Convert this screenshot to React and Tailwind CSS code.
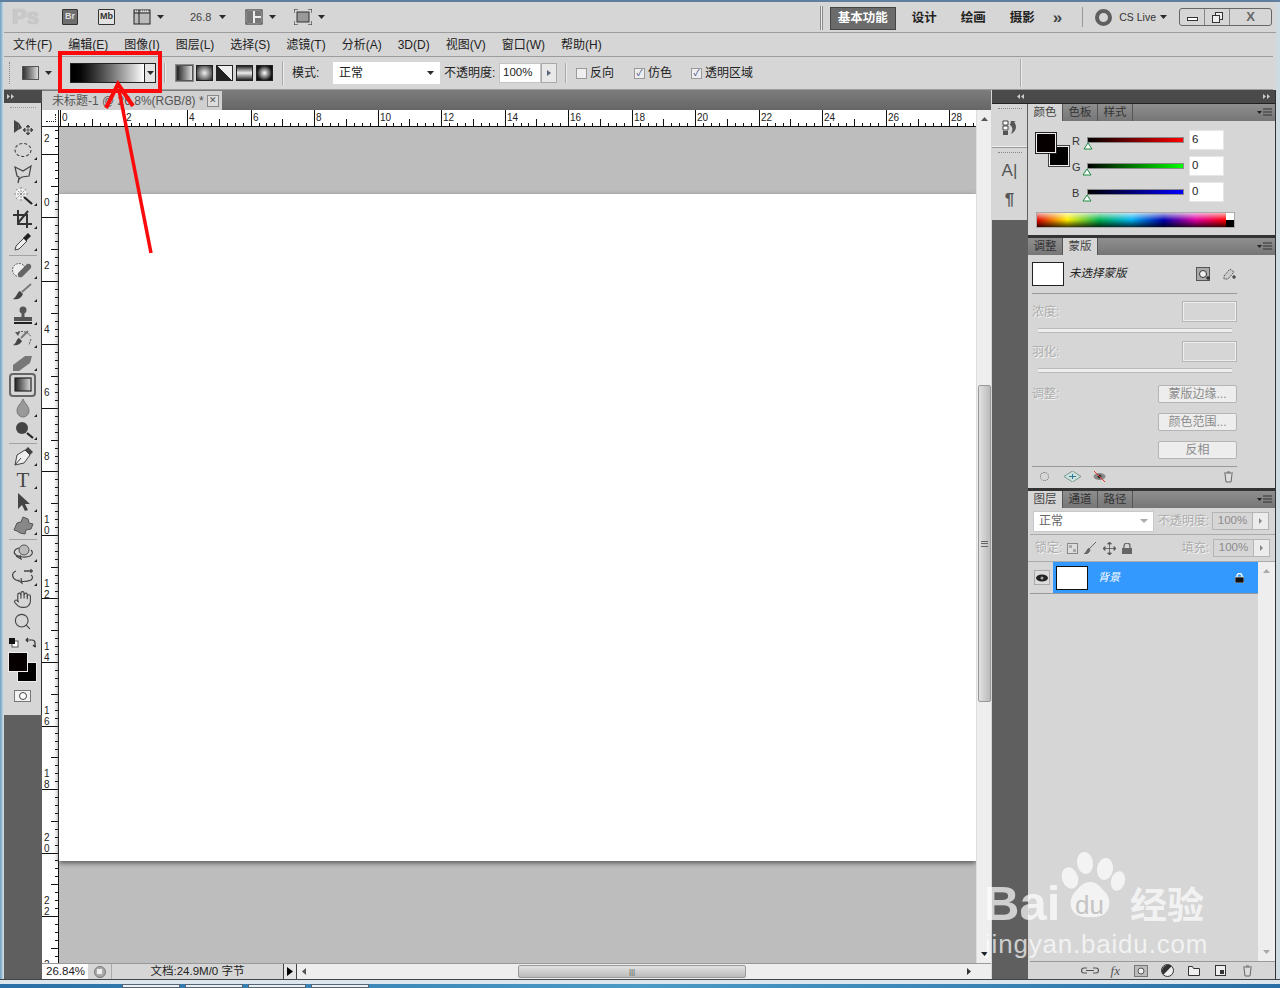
import React from 'react';
import { Hand, Search } from 'lucide-react';

const menus = ['文件(F)', '编辑(E)', '图像(I)', '图层(L)', '选择(S)', '滤镜(T)', '分析(A)', '3D(D)', '视图(V)', '窗口(W)', '帮助(H)'];

const Caret = ({ className = '' }) => (
  <svg width="7" height="4" viewBox="0 0 7 4" className={className}><path d="M0 0h7L3.500 4z" fill="#2a2a2a" /></svg>
);

const Sep = ({ className = '' }) => <div className={`w-px bg-[#a9a9a9] border-r border-[#ececec] box-content ${className}`} />;

// tools : une icone par ligne, viewBox 37x23
const Corner = () => <path d="M33 21h-3l3-3z" fill="#222" />;
const tools = [
  { h: 23, d: <><path d="M10 4v13l4-3 1-7z" fill="#444" /><path d="M15 7l3 5-4 2z" fill="#444" /><path d="M24 9v10M19 14h10M24 9l-2 2h4zM24 19l-2-2h4zM19 14l2-2v4zM29 14l-2-2v4z" stroke="#444" fill="#444" strokeWidth="0.800" /></> },
  { h: 23, corner: true, d: <ellipse cx="19" cy="11" rx="8" ry="6.500" fill="none" stroke="#444" strokeWidth="1.100" strokeDasharray="3 2" /> },
  { h: 23, corner: true, d: <path d="M11 5l8 4 8-5-2 10-7 1-3 2-1 4 1-6-2-1z" fill="none" stroke="#444" strokeWidth="1.200" /> },
  { h: 23, corner: true, d: <><circle cx="17" cy="9" r="5.500" fill="#f2f2f2" /><path d="M17 2v14M10 9h14M12 4l10 10M22 4L12 14" stroke="#777" strokeWidth="0.800" strokeDasharray="2 1" /><path d="M20 12l8 7" stroke="#222" strokeWidth="2.200" /></> },
  { h: 22, corner: true, d: <path d="M14 2v14h14M9 7h14v13M24 3L14 15" fill="none" stroke="#333" strokeWidth="2" /> },
  { h: 23, corner: true, d: <><path d="M11 20l1-4 8-8 3 3-8 8z" fill="#eee" stroke="#444" strokeWidth="1" /><path d="M19 8l5-5 3 3-5 5z" fill="#222" /></> },
  { sep: true, h: 5 },
  { h: 23, corner: true, d: <><circle cx="15" cy="12" r="6.500" fill="#eee" stroke="#666" strokeDasharray="2 1" /><path d="M14 15l9-9a3 3 0 014 4l-9 9a3 3 0 01-4-4z" fill="#666" /></> },
  { h: 23, corner: true, d: <><path d="M9 18c3 1 8 0 10-5l-3-3c-3 1-3 6-7 8z" fill="#444" /><path d="M18 11l9-8" stroke="#777" strokeWidth="1.800" /></> },
  { h: 23, corner: true, d: <><circle cx="19" cy="6" r="3.500" fill="#555" /><path d="M17.500 8h3v5h-3z" fill="#555" /><path d="M10 13h18v4H10z" fill="#555" /><path d="M10 18h18v2H10z" fill="#222" /></> },
  { h: 23, corner: true, d: <><path d="M9 18c3 1 7 0 9-4l-3-3c-3 1-2 5-6 7z" fill="#444" /><path d="M17 11l7-7" stroke="#777" strokeWidth="1.800" /><path d="M14 5a10 8 0 0113 5M27 12l-2 6" fill="none" stroke="#555" strokeDasharray="2 1" /><path d="M11 5h5l-2 4z" fill="#555" /></> },
  { h: 23, corner: true, d: <path d="M9 15l12-9h7l-2 7-11 8H9z" fill="#777" /> },
  { h: 23, corner: true, selected: true, d: <rect x="11" y="5" width="16" height="13" fill="url(#toolGrad)" stroke="#222" strokeWidth="1.200" /> },
  { h: 23, corner: true, d: <path d="M19 3c-2 5-6 7-6 12a6 6 0 0012 0c0-5-4-7-6-12z" fill="#999" stroke="#777" /> },
  { h: 23, corner: true, d: <><circle cx="18" cy="9" r="6" fill="#444" /><path d="M23 14l6 5" stroke="#222" strokeWidth="2.200" /></> },
  { sep: true, h: 3 },
  { h: 23, corner: true, d: <><path d="M11 20l2-10 8-5 5 5-6 8z" fill="#eee" stroke="#444" strokeWidth="1" /><path d="M21 5l3-3 5 5-3 3z" fill="#444" /><path d="M11 20l6-7" stroke="#444" /></> },
  { h: 23, corner: true, d: <text x="19" y="19" textAnchor="middle" fontFamily="Liberation Serif, serif" fontSize="21" fill="#444">T</text> },
  { h: 23, corner: true, d: <path d="M14 2v16l4-4 3 6 3-1-3-6h5z" fill="#444" /> },
  { h: 23, corner: true, d: <path d="M10 16l3-7 4-1 2-5 5 2 1 4 4 1-2 5-5 1-1 4-5-1-3-2z" fill="#888" stroke="#555" /> },
  { sep: true, h: 4 },
  { h: 24, corner: true, d: <><circle cx="20" cy="9" r="5" fill="#bbb" stroke="#555" /><path d="M15 7c-5 1-6 5-3 7s10 3 14 1c3-2 3-4 1-6M12 15l5 3-1-4" fill="none" stroke="#444" strokeWidth="1.200" /></> },
  { h: 23, corner: true, d: <><path d="M12 6c-5 2-4 7 0 9s11 2 15 0c2-2 2-4 0-5M14 15l4 3-1-5" fill="none" stroke="#444" strokeWidth="1.200" /><path d="M20 6h9M27 4v4" stroke="#444" strokeWidth="1.300" /></> },
  { h: 22, icon: Hand },
  { h: 22, icon: Search },
];

function ToolRow({ tool }) {
  if (tool.sep) return <div className="flex items-center justify-center" style={{ height: tool.h }}><div className="w-[28px] h-px bg-[#a3a3a3]" /></div>;
  const Icon = tool.icon;
  if (Icon) {
    return (
      <div className="flex items-center justify-center" style={{ height: tool.h }}>
        <Icon size={19} strokeWidth={1.400} color="#444" />
      </div>
    );
  }
  return (
    <div className="flex items-center justify-center" style={{ height: tool.h }}>
      <div className={tool.selected ? 'w-[27px] h-[24px] flex items-center justify-center overflow-hidden rounded-[4px] border-2 border-[#666]' : ''}>
        <svg width="37" height={tool.h} viewBox={`0 0 37 ${tool.h}`} className="shrink-0">
          {tool.d}
          {tool.corner && !tool.selected && <Corner />}
        </svg>
      </div>
    </div>
  );
}

function Toolbar() {
  return (
    <div className="w-[38px] shrink-0 flex flex-col bg-[#5f5f5f]">
      <div className="h-[13px] bg-[#4a4a4a] flex items-center pl-[3px]">
        <svg width="8" height="5"><path d="M0 0l3 2.500L0 5zM4 0l3 2.500L4 5z" fill="#ccc" /></svg>
      </div>
      <div className="h-[612px] bg-[#d6d6d6] border-r border-[#333] flex flex-col">
        <svg width="37" height="0"><defs><linearGradient id="toolGrad"><stop offset="0" stopColor="#222" /><stop offset="1" stopColor="#ddd" /></linearGradient></defs></svg>
        <div className="h-[13px] flex justify-center pt-[4px]"><div className="w-[26px] h-[2px] border-t border-dotted border-[#999]" /></div>
        {tools.map((t, i) => <ToolRow key={i} tool={t} />)}
        <div className="h-[11px] flex items-center justify-between px-[5px] mt-[5px]">
          <svg width="10" height="10"><rect x="3" y="3" width="6" height="6" fill="#fff" stroke="#555" /><rect width="6" height="6" fill="#111" /></svg>
          <svg width="11" height="11" viewBox="0 0 11 11"><path d="M1 3h6a3 3 0 013 3v4M1 3l2-2M1 3l2 2M10 10l-2-2M10 10l2-2" fill="none" stroke="#333" strokeWidth="1.200" /></svg>
        </div>
        <div className="h-[31px] relative ml-[4px] mt-[4px]">
          <div className="absolute left-[9px] top-[10px] w-[20px] h-[20px] bg-black border border-[#eee]" />
          <div className="absolute left-0 top-0 w-[20px] h-[20px] bg-[#060000] border border-[#eee]" />
        </div>
        <div className="flex justify-center mt-[7px]">
          <div className="w-[17px] h-[12px] bg-[#f2f2f2] border border-[#777] flex items-center justify-center">
            <div className="w-[8px] h-[8px] rounded-full border border-[#444] bg-white" />
          </div>
        </div>
      </div>
    </div>
  );
}

function TitleBar() {
  return (
    <div className="h-[31px] shrink-0 border-b border-[#9c9c9c] flex items-center">
      <span className="ml-[8px] w-[34px] text-[22px] font-bold text-[#c9c9c9] [text-shadow:0_0_1px_#aaa] leading-none">Ps</span>
      <div className="ml-[16px] w-[16px] h-[16px] bg-[#6e6e6e] border border-[#333] rounded-[1px] text-[9px] font-bold text-[#ddd] flex items-center justify-center">Br</div>
      <div className="ml-[20px] w-[17px] h-[16px] bg-[#e2e2e2] border border-[#333] rounded-[1px] text-[9px] font-bold text-[#333] flex items-center justify-center">Mb</div>
      <svg className="ml-[18px]" width="18" height="16" viewBox="0 0 18 16"><rect x="1" y="1" width="16" height="14" fill="#bbb" stroke="#222" /><path d="M1 4h16M6 1v14" stroke="#222" /><path d="M2 2h1M4 2h1M8 2h1M10 2h1M12 2h1M14 2h1" stroke="#fff" /></svg>
      <Caret className="ml-[6px]" />
      <span className="ml-[26px] text-[11px] text-[#444] w-[30px]">26.8</span>
      <Caret className="ml-[-1px]" />
      <svg className="ml-[19px]" width="18" height="16" viewBox="0 0 18 16"><rect x="1" y="1" width="16" height="14" fill="#eee" stroke="#222" /><path d="M2 2h6v12H2zM10 2h6v5h-6zM10 9h6v5h-6z" fill="#777" /></svg>
      <Caret className="ml-[6px]" />
      <svg className="ml-[18px]" width="18" height="16" viewBox="0 0 18 16"><rect x="3" y="3" width="12" height="10" fill="#999" stroke="#333" /><path d="M0 4V0h4M14 0h4v4M18 12v4h-4M4 16H0v-4" fill="none" stroke="#222" /></svg>
      <Caret className="ml-[6px]" />
      <div className="flex-1" />
      <div className="w-[3px] h-[24px] mt-[2px] border-x border-[#888] bg-[#eee]" />
      <div className="ml-[7px] mt-[2px] w-[66px] h-[23px] bg-[#6b6b6b] border border-[#444] text-white text-[12.500px] font-bold flex items-center justify-center">基本功能</div>
      <span className="ml-[16px] mt-[2px] text-[12.500px] font-bold text-[#222]">设计</span>
      <span className="ml-[24px] mt-[2px] text-[12.500px] font-bold text-[#222]">绘画</span>
      <span className="ml-[24px] mt-[2px] text-[12.500px] font-bold text-[#222]">摄影</span>
      <span className="ml-[18px] text-[17px] font-bold text-[#444] leading-none">»</span>
      <div className="ml-[20px] w-px h-[20px] bg-[#999]" />
      <div className="ml-[12px] w-[17px] h-[17px] rounded-full border-[4px] border-[#5f5f5f]" />
      <span className="ml-[7px] mt-[2px] text-[10.500px] text-[#333]">CS Live</span>
      <Caret className="ml-[4px]" />
      <div className="ml-[12px] mr-[4px] w-[93px] h-[18px] border border-[#666] rounded-[3px] flex items-center text-[#444]">
        <div className="w-[25px] h-full border-r border-[#888] flex items-center justify-center"><div className="w-[11px] h-[4px] bg-white border border-[#333] mt-[4px]" /></div>
        <div className="w-[25px] h-full border-r border-[#888] flex items-center justify-center">
          <svg width="11" height="11"><rect x="3.500" y="0.500" width="7" height="7" fill="#eee" stroke="#333" /><rect x="0.500" y="3.500" width="7" height="7" fill="#eee" stroke="#333" /></svg>
        </div>
        <div className="flex-1 flex items-center justify-center text-[13px] font-bold text-[#666]">X</div>
      </div>
    </div>
  );
}

function MenuBar() {
  return (
    <div className="h-[23px] shrink-0 flex items-center gap-[16px] pl-[9px] text-[12px] text-[#222]">
      {menus.map(m => <span key={m}>{m}</span>)}
    </div>
  );
}

const GradBtn = ({ fill, active }) => (
  <div className={`w-[17px] h-[16px] border ${active ? 'border-[#555] outline outline-1 outline-[#888]' : 'border-[#222]'}`} style={{ background: fill }} />
);

const Check = ({ checked }) => (
  <div className="w-[11px] h-[11px] bg-[#eee] border border-[#9a9a9a] flex items-center justify-center text-[9px] leading-none text-[#3b4a88]">{checked ? '✓' : ''}</div>
);

function OptionsBar() {
  return (
    <div className="h-[34px] shrink-0 border-y border-[#9c9c9c] flex items-center text-[12px] text-[#222] mr-[3px]">
      <div className="ml-[5px] w-[3px] h-[22px] border-l border-dotted border-[#888]" />
      <div className="ml-[10px] w-[17px] h-[14px] border border-[#555] bg-linear-to-r from-[#333] to-[#ddd]" />
      <Caret className="ml-[6px]" />
      <div className="ml-[18px] w-[86px] h-[20px] border border-[#222] flex">
        <div className="flex-1 bg-linear-to-r from-black to-white" />
        <div className="w-[11px] bg-[#e5e5e5] border-l border-[#222] flex items-center justify-center"><Caret /></div>
      </div>
      <Sep className="ml-[8px] h-[20px]" />
      <div className="ml-[10px] flex gap-[3px]">
        <GradBtn active fill="linear-gradient(90deg,#222,#ddd)" />
        <GradBtn fill="radial-gradient(circle,#eee,#222)" />
        <GradBtn fill="linear-gradient(45deg,#222 50%,#eee 50%)" />
        <GradBtn fill="linear-gradient(180deg,#222,#eee 50%,#222)" />
        <GradBtn fill="radial-gradient(circle,#fff,#111 75%)" />
      </div>
      <Sep className="ml-[9px] h-[24px]" />
      <span className="ml-[8px] w-[41px]">模式:</span>
      <div className="w-[107px] h-[22px] bg-white flex items-center justify-between px-[6px]">
        <span>正常</span><Caret />
      </div>
      <span className="ml-[4px] w-[55px]">不透明度:</span>
      <div className="w-[42px] h-[20px] bg-white border border-[#c5c5c5] flex items-center pl-[3px] text-[11.500px]">100%</div>
      <div className="w-[16px] h-[20px] bg-[#e8e8e8] border border-[#aaa] flex items-center justify-center">
        <svg width="4" height="6"><path d="M0 0l4 3-4 3z" fill="#567" /></svg>
      </div>
      <Sep className="ml-[8px] h-[20px]" />
      <div className="ml-[9px] flex items-center gap-[3px]"><Check /><span>反向</span></div>
      <div className="ml-[20px] flex items-center gap-[3px]"><Check checked /><span>仿色</span></div>
      <div className="ml-[19px] flex items-center gap-[3px]"><Check checked /><span>透明区域</span></div>
      <Sep className="ml-[267px] h-[28px]" />
    </div>
  );
}

const rulerXs = Array.from({ length: 15 }, (_, i) => i);
const ticks = Array.from({ length: 119 }, (_, i) => i);

function TopRuler() {
  return (
    <svg width="916" height="17" className="block bg-white">
      {ticks.map(i => {
        const x = Math.round(i * 7.94) + 1.500;
        const len = i % 8 === 0 ? 17 : i % 4 === 0 ? 8 : 4;
        return <line key={i} x1={x} x2={x} y1={17 - len} y2={17} stroke="#111" />;
      })}
      {rulerXs.map(i => <text key={i} x={Math.round(i * 63.5) + 3} y={11} fontSize="10" fontFamily="Liberation Sans, sans-serif" fill="#222">{i * 2}</text>)}
      <line x1="0" x2="916" y1="16.500" y2="16.500" stroke="#111" />
    </svg>
  );
}

// le dernier chiffre (24) est coupe par le bord du document
const vLabels = ['2', '0', '2', '4', '6', '8', '10', '12', '14', '16', '18', '20', '22', '2'];

function LeftRuler() {
  return (
    <svg width="17" height="836" className="block bg-white shrink-0">
      {Array.from({ length: 106 }, (_, i) => i).map(i => {
        const y = Math.round(i * 7.94) + 3.500;
        const len = i % 8 === 3 ? 17 : i % 4 === 3 ? 8 : 4;
        return <line key={i} x1={17 - len} x2={17} y1={y} y2={y} stroke="#111" />;
      })}
      {vLabels.map((v, i) => (
        <text key={i} x="2" y={Math.round(i * 63.5) + 15} fontSize="10" fontFamily="Liberation Sans, sans-serif" fill="#222">
          {v.split('').map((c, j) => <tspan key={j} x="2" dy={j ? 11 : 0}>{c}</tspan>)}
        </text>
      ))}
      <line x1="16.500" x2="16.500" y1="0" y2="836" stroke="#111" />
    </svg>
  );
}

function Document() {
  return (
    <div className="w-[949px] shrink-0 flex flex-col bg-[#5f5f5f]">
      <div className="h-[20px] shrink-0 bg-linear-to-b from-[#7d7d7d] to-[#666] flex items-end">
        <div className="ml-0 w-[180px] h-[19px] bg-[#d0d0d0] flex items-center pl-[10px] pr-[3px] text-[12px] text-[#555]">
          <span className="flex-1 truncate">未标题-1 @ 26.8%(RGB/8) *</span>
          <div className="w-[12px] h-[12px] border border-[#888] bg-[#ddd] flex items-center justify-center text-[9px] leading-none text-[#555]">✕</div>
        </div>
      </div>
      <div className="flex-1 flex min-h-0">
        <div className="flex-1 flex flex-col min-w-0">
          <div className="h-[17px] shrink-0 flex bg-white border-b border-[#222]">
            <div className="w-[17px] h-full border-r border-[#222] flex items-end justify-end pb-[4px] pr-[2px]"><div className="w-[10px] h-[8px] border-b border-r border-dotted border-[#222]" /></div>
            <TopRuler />
          </div>
          <div className="flex h-[836px] overflow-hidden">
            <LeftRuler />
            <div className="flex-1 bg-[#bdbdbd] flex flex-col">
              <div className="h-[67px] shrink-0" />
              <div className="h-[667px] shrink-0 bg-white shadow-[0_2px_5px_#555]" />
            </div>
          </div>
        </div>
        <div className="w-[15px] shrink-0 bg-[#eeeeee] flex flex-col items-center border-l border-[#ddd]">
          <svg className="mt-[7px]" width="7" height="4"><path d="M3.500 0L7 4H0z" fill="#555" /></svg>
          <div className="mt-[264px] w-[13px] h-[317px] bg-linear-to-r from-[#e2e2e2] to-[#bbb] border border-[#999] rounded-[2px] flex items-center justify-center">
            <div className="w-[7px] h-[6px] border-y border-[#666] flex items-center"><div className="w-full h-px bg-[#666]" /></div>
          </div>
          <div className="flex-1" />
          <svg className="mb-[7px]" width="7" height="4"><path d="M0 0h7L3.500 4z" fill="#222" /></svg>
        </div>
      </div>
      <div className="h-[16px] shrink-0 bg-[#d6d6d6] border-t border-[#999] flex items-center text-[11.500px] text-[#222]">
        <div className="w-[46px] h-full bg-white pl-[4px] flex items-center">26.84%</div>
        <div className="w-[24px] h-full border-r border-[#aaa] flex items-center justify-center">
          <div className="w-[12px] h-[12px] rounded-full bg-[#aaa] border border-[#777] flex items-center justify-center"><div className="w-[5px] h-[5px] bg-[#eee]" /></div>
        </div>
        <div className="w-[171px] text-center">文档:24.9M/0 字节</div>
        <div className="w-[14px] h-full bg-[#e5e5e5] border-x border-[#444] flex items-center justify-center">
          <svg width="6" height="9"><path d="M0 0l6 4.500L0 9z" fill="#000" /></svg>
        </div>
        <div className="flex-1 h-full bg-[#eeeeee] flex items-center">
          <svg className="ml-[5px]" width="4" height="7"><path d="M4 0v7L0 3.500z" fill="#555" /></svg>
          <div className="ml-[212px] w-[228px] h-[13px] bg-linear-to-b from-[#e2e2e2] to-[#bbb] border border-[#999] rounded-[2px] flex items-center justify-center text-[8px] text-[#555] leading-none">|||</div>
          <div className="flex-1" />
          <svg className="mr-[20px]" width="4" height="7"><path d="M0 0v7l4-3.500z" fill="#333" /></svg>
        </div>
      </div>
    </div>
  );
}

function Dock() {
  return (
    <div className="w-[36px] shrink-0 ml-px flex flex-col bg-[#5f5f5f]">
      <div className="h-[14px] bg-[#4a4a4a] border-b border-[#222] flex items-center justify-end pr-[3px]">
        <svg width="8" height="5"><path d="M3 0L0 2.500 3 5zM7 0L4 2.500 7 5z" fill="#ccc" /></svg>
      </div>
      <div className="h-[43px] shrink-0 bg-[#d6d6d6] border-b border-[#f0f0f0] flex flex-col items-center mr-px">
        <div className="w-[24px] mt-[4px] border-t border-dotted border-[#888]" />
        <svg className="mt-[11px]" width="16" height="16" viewBox="0 0 16 16"><path d="M1 1h5v4H1zM1 6h5v4H1z" fill="#fff" stroke="#444" /><path d="M1 11h5v4H1z" fill="#555" /><path d="M9 1h5l-2 1c3 3 3 9-3 12 2-4 2-7-1-9z" fill="#555" /></svg>
      </div>
      <div className="h-[73px] shrink-0 bg-[#d6d6d6] border-t border-[#999] flex flex-col items-center mr-px">
        <div className="w-[24px] mt-[4px] border-t border-dotted border-[#888]" />
        <span className="mt-[6px] text-[17px] leading-[24px] text-[#555]">A|</span>
        <span className="mt-[7px] text-[17px] leading-[20px] font-bold text-[#555]">¶</span>
      </div>
    </div>
  );
}

const PanelMenu = () => (
  <svg width="15" height="9" className="mr-[3px]" viewBox="0 0 15 9"><path d="M0 3h5L2.500 6z" fill="#222" /><path d="M6 1h9M6 4h9M6 7h9" stroke="#333" /></svg>
);

function Tabs({ items }) {
  return (
    <div className="h-[17px] shrink-0 bg-linear-to-b from-[#8f8f8f] to-[#767676] flex items-end justify-between text-[11.500px]">
      <div className="flex h-full">
        {items.map((t, i) => (
          <div key={t} className={`w-[35px] flex items-center justify-center border-r border-[#555] ${i === (items[0] === '调整' ? 1 : 0) ? 'bg-[#d6d6d6] text-[#444]' : 'text-[#333]'}`}>{t}</div>
        ))}
      </div>
      <div className="self-center"><PanelMenu /></div>
    </div>
  );
}

function SliderRow({ label, value, gradient, thumb }) {
  return (
    <div className="h-[26px] flex items-center">
      <span className="w-[16px] text-[11px] text-[#333] pt-[2px]">{label}</span>
      <div className="flex flex-col ml-[-1px]">
        <div className="w-[97px] h-[6px] border border-[#8a8a8a]" style={{ background: gradient }} />
        <svg width="10" height="7" style={{ marginLeft: thumb }} className="-mb-[7px]"><path d="M5 0l4 6H1z" fill="#fff" stroke="#1a8a3c" /></svg>
      </div>
      <div className="ml-[5px] w-[35px] h-[20px] bg-white border border-[#e6e6e6] text-[11.500px] pl-[2px] flex items-center text-[#222]">{value}</div>
    </div>
  );
}

function ColorPanel() {
  return (
    <>
      <Tabs items={['颜色', '色板', '样式']} />
      <div className="h-[116px] shrink-0 border-b-2 border-[#333] pl-[8px]">
        <div className="flex pt-[6px]">
          <div className="relative w-[36px] h-[36px] mt-[6px]">
            <div className="absolute left-[13px] top-[13px] w-[20px] h-[20px] bg-black border border-[#eee] outline outline-1 outline-[#444]" />
            <div className="absolute left-0 top-0 w-[20px] h-[20px] bg-[#060000] border border-[#eee] outline outline-1 outline-[#222]" />
          </div>
          <div className="flex flex-col">
            <SliderRow label="R" value="6" gradient="linear-gradient(90deg,#000,#f00)" thumb={-4} />
            <SliderRow label="G" value="0" gradient="linear-gradient(90deg,#000,#0f0)" thumb={-5} />
            <SliderRow label="B" value="0" gradient="linear-gradient(90deg,#000,#00f)" thumb={-5} />
          </div>
        </div>
        <div className="mt-[7px] w-[199px] h-[16px] border border-[#aaa] flex">
          <div className="flex-1 relative" style={{ background: 'linear-gradient(90deg,#e00000,#ffee00 16%,#00b050 33%,#00b0f0 50%,#0000b0 67%,#e000a0 84%,#ff0000)' }}>
            <div className="absolute inset-0 bg-linear-to-b from-[#ffffffb0] via-transparent to-[#000000c0]" />
          </div>
          <div className="w-[8px] flex flex-col"><div className="flex-1 bg-white" /><div className="flex-1 bg-black" /></div>
        </div>
      </div>
    </>
  );
}

const dim = 'text-[#adadad] [text-shadow:1px_1px_0_#f4f4f4] text-[12px]';
const DimBtn = ({ children, className = '' }) => (
  <div className={`w-[79px] h-[18px] rounded-[2px] bg-[#ededed] border border-[#b5b5b5] flex items-center justify-center text-[12px] text-[#8c8c8c] ${className}`}>{children}</div>
);

function MaskPanel() {
  return (
    <>
      <div className="h-px bg-[#333]" />
      <Tabs items={['调整', '蒙版']} />
      <div className="h-[236px] shrink-0 border-b-[3px] border-[#333] pl-[4px] pr-[38px] flex flex-col">
        <div className="h-[39px] flex items-center border-b border-[#999]">
          <div className="w-[32px] h-[24px] bg-white border border-[#222] mt-[-1px]" />
          <span className="ml-[5px] italic text-[11.500px] text-[#222]">未选择蒙版</span>
          <div className="flex-1" />
          <svg width="14" height="14" viewBox="0 0 14 14"><rect x="0.500" y="0.500" width="13" height="13" fill="#aaa" stroke="#555" /><circle cx="7" cy="7" r="3.500" fill="#eee" stroke="#333" /><path d="M10 11h4M12 9v4" stroke="#111" /></svg>
          <svg className="ml-[12px]" width="15" height="14" viewBox="0 0 15 14"><path d="M2 9l6-7 4 3-6 7H2z" fill="#ccc" stroke="#555" strokeDasharray="2 1" /><path d="M10 10h4M12 8v4" stroke="#222" /></svg>
        </div>
        <div className="flex items-center justify-between mt-[6px] h-[22px]">
          <span className={`${dim} pt-[2px]`}>浓度:</span>
          <div className="w-[55px] h-[21px] border border-[#b5b5b5] outline outline-1 -outline-offset-2 outline-[#eee]" />
        </div>
        <div className="ml-[6px] mt-[6px] w-[194px] h-[3px] bg-[#eee] border-y border-[#bbb] box-content" />
        <div className="flex items-center justify-between mt-[7px] h-[22px]">
          <span className={`${dim} pt-[2px]`}>羽化:</span>
          <div className="w-[55px] h-[21px] border border-[#b5b5b5] outline outline-1 -outline-offset-2 outline-[#eee]" />
        </div>
        <div className="ml-[6px] mt-[6px] w-[194px] h-[3px] bg-[#eee] border-y border-[#bbb] box-content" />
        <div className="flex items-center justify-between mt-[12px]">
          <span className={dim}>调整:</span>
          <DimBtn>蒙版边缘...</DimBtn>
        </div>
        <DimBtn className="self-end mt-[10px]">颜色范围...</DimBtn>
        <DimBtn className="self-end mt-[10px]">反相</DimBtn>
        <div className="mt-[7px] h-[20px] border-t border-[#999] flex items-center pl-[8px]">
          <div className="w-[9px] h-[9px] rounded-full border border-dotted border-[#666]" />
          <svg className="ml-[15px]" width="17" height="11" viewBox="0 0 17 11"><path d="M8.500 0L17 5.500 8.500 11 0 5.500z" fill="#cfe3dc" stroke="#7a9a90" /><path d="M5 5.500h7M8.500 3v5" stroke="#2a7a9a" /></svg>
          <svg className="ml-[12px]" width="13" height="11" viewBox="0 0 13 11"><ellipse cx="6.500" cy="5.500" rx="6" ry="3.500" fill="#888" /><circle cx="6.500" cy="5.500" r="2" fill="#333" /><path d="M1 0l11 11" stroke="#e33" /></svg>
          <div className="flex-1" />
          <svg className="mr-[3px]" width="11" height="12" viewBox="0 0 11 12"><path d="M1 2h9M2 3l1 8h5l1-8" fill="#ddd" stroke="#666" /><path d="M4 1h3" stroke="#666" /></svg>
        </div>
      </div>
    </>
  );
}

const Stepper = ({ value }) => (
  <div className="flex h-[18px]">
    <div className="w-[41px] bg-[#d6d6d6] border border-[#b5b5b5] text-[11.500px] text-[#8c8c8c] flex items-center justify-center">{value}</div>
    <div className="w-[16px] bg-[#ececec] border-y border-r border-[#b5b5b5] flex items-center justify-center">
      <svg width="3" height="6"><path d="M0 0l3 3-3 3z" fill="#888" /></svg>
    </div>
  </div>
);

function LayersPanel() {
  return (
    <>
      <Tabs items={['图层', '通道', '路径']} />
      <div className="flex-1 flex flex-col min-h-0">
        <div className="h-[27px] shrink-0 flex items-center pl-[5px] pr-[5px] border-b border-[#aaa] ml-[2px]">
          <div className="w-[121px] h-[21px] bg-white border border-[#c8c8c8] rounded-[1px] flex items-center justify-between px-[5px] text-[12px] text-[#666] -ml-[2px]">
            <span>正常</span><svg width="8" height="4"><path d="M0 0h8L4 4z" fill="#aaa" /></svg>
          </div>
          <span className={`${dim} ml-[4px] w-[54px]`}>不透明度:</span>
          <Stepper value="100%" />
        </div>
        <div className="h-[27px] shrink-0 flex items-center pl-[7px] pr-[5px] border-b border-[#aaa]">
          <span className={`${dim} w-[32px]`}>锁定:</span>
          <svg width="11" height="11" className="mr-[6px]"><rect x="0.500" y="0.500" width="10" height="10" fill="#ddd" stroke="#888" /><rect x="2" y="2" width="3" height="3" fill="#aaa" /><rect x="6" y="6" width="3" height="3" fill="#aaa" /></svg>
          <svg width="13" height="12" className="mr-[6px]" viewBox="0 0 13 12"><path d="M0 12c3 0 5-1 6-4L5 6C3 7 3 10 0 12zM6 6l6-6" fill="#666" stroke="#666" /></svg>
          <svg width="13" height="13" className="mr-[6px]" viewBox="0 0 13 13"><path d="M6.500 0v13M0 6.500h13M6.500 0l-2 2h4zM6.500 13l-2-2h4zM0 6.500l2-2v4zM13 6.500l-2-2v4z" stroke="#555" fill="#555" strokeWidth="0.800" /></svg>
          <svg width="10" height="11" viewBox="0 0 10 11"><path d="M2 5V3a3 3 0 016 0v2" fill="none" stroke="#666" strokeWidth="1.300" /><rect y="5" width="10" height="6" fill="#666" /></svg>
          <div className="flex-1" />
          <span className={`${dim} mr-[4px]`}>填充:</span>
          <Stepper value="100%" />
        </div>
        <div className="flex-1 flex min-h-0 pl-[2px]">
          <div className="flex-1 flex flex-col">
            <div className="h-[32px] flex border-b border-[#999]">
              <div className="w-[23px] flex items-center justify-center">
                <div className="w-[16px] h-[15px] bg-[#ddd] border border-[#aaa] flex items-center justify-center">
                  <svg width="12" height="8" viewBox="0 0 12 8"><ellipse cx="6" cy="4" rx="6" ry="3.500" fill="#222" /><circle cx="6" cy="4" r="1.500" fill="#aaa" /></svg>
                </div>
              </div>
              <div className="flex-1 bg-[#3399ff] flex items-center pl-[3px] pr-[14px]">
                <div className="w-[32px] h-[24px] bg-white border border-[#111]" />
                <span className="ml-[10px] italic text-[11px] text-white">背景</span>
                <div className="flex-1" />
                <svg width="9" height="10" viewBox="0 0 9 10"><path d="M2 5V3a2.500 2.500 0 015 0v2" fill="none" stroke="#fff" strokeWidth="1.300" /><rect y="4" width="9" height="6" fill="#111" stroke="#fff" strokeWidth="0.600" /></svg>
              </div>
            </div>
          </div>
          <div className="w-[17px] shrink-0 bg-[#eeeeee] flex flex-col items-center justify-between py-[7px]">
            <svg width="7" height="4"><path d="M3.500 0L7 4H0z" fill="#aaa" /></svg>
            <svg width="7" height="4"><path d="M0 0h7L3.500 4z" fill="#aaa" /></svg>
          </div>
        </div>
        <div className="h-[18px] shrink-0 border-t border-[#999] flex items-center justify-end pr-[22px] ml-[2px]">
          <svg width="18" height="7" viewBox="0 0 18 7"><path d="M6 1H3a2.500 2.500 0 000 5h3M12 1h3a2.500 2.500 0 010 5h-3M5 3.500h8" fill="none" stroke="#555" strokeWidth="1.200" /></svg>
          <span className="ml-[12px] italic font-['Liberation_Serif',serif] text-[13px] text-[#555] leading-none">fx</span>
          <svg className="ml-[14px]" width="14" height="12"><rect x="0.500" y="0.500" width="13" height="11" fill="#bbb" stroke="#777" /><circle cx="7" cy="6" r="3" fill="#eee" stroke="#555" /></svg>
          <svg className="ml-[13px]" width="13" height="13" viewBox="0 0 13 13"><circle cx="6.500" cy="6.500" r="6" fill="#eee" stroke="#333" /><path d="M2.300 10.700A6 6 0 0110.700 2.300z" fill="#333" /></svg>
          <svg className="ml-[14px]" width="12" height="10"><path d="M0.500 9.500v-9h4l1 2h6v7z" fill="#eee" stroke="#333" /></svg>
          <svg className="ml-[15px]" width="11" height="11"><rect x="0.500" y="0.500" width="10" height="10" fill="#eee" stroke="#333" /><rect x="5" y="5" width="4" height="4" fill="#333" /></svg>
          <svg className="ml-[16px]" width="11" height="12" viewBox="0 0 11 12"><path d="M1 2h9M2 3l1 8h5l1-8" fill="#ddd" stroke="#666" /><path d="M4 1h3" stroke="#666" /></svg>
        </div>
      </div>
    </>
  );
}

function RightPanels() {
  return (
    <div className="flex-1 flex flex-col border-r border-[#333] min-w-0">
      <div className="h-[14px] shrink-0 bg-[#4a4a4a] border-b border-[#222] flex items-center justify-end pr-[4px]">
        <svg width="8" height="5"><path d="M0 0l3 2.500L0 5zM4 0l3 2.500L4 5z" fill="#ccc" /></svg>
      </div>
      <ColorPanel />
      <MaskPanel />
      <LayersPanel />
    </div>
  );
}

// annotation rouge par-dessus la capture
function Annotation() {
  return (
    <div className="absolute inset-0 pointer-events-none">
      <div className="absolute left-[58px] top-[51px] w-[104px] h-[42px] border-[4px] border-[#fa0a0a]" />
      <svg width="200" height="270" className="absolute left-0 top-0">
        <path d="M151 253L119 90" stroke="#fa0a0a" strokeWidth="3.500" fill="none" />
        <path d="M106 108L118 84 133 106" stroke="#fa0a0a" strokeWidth="4" fill="none" />
      </svg>
    </div>
  );
}

function Watermark() {
  return (
    <div className="absolute left-[984px] top-[850px] w-[240px] h-[110px] pointer-events-none text-white/70 font-['Liberation_Sans',sans-serif]">
      <svg width="240" height="80" className="absolute left-0 top-0" fill="#fff" fillOpacity="0.7">
        <ellipse cx="101" cy="13" rx="8" ry="11" transform="rotate(-8 101 13)" />
        <ellipse cx="121" cy="19" rx="8" ry="11" transform="rotate(8 121 19)" />
        <ellipse cx="86" cy="28" rx="8" ry="11" transform="rotate(-20 86 28)" />
        <ellipse cx="134" cy="31" rx="7" ry="10" transform="rotate(15 134 31)" />
        <path d="M106 32c8 0 11 6 16 11 5 6 5 17-3 22-6 3-13 2-13 2s-7 1-13-2c-8-5-8-16-3-22 5-5 8-11 16-11z" />
      </svg>
      <span className="absolute left-0 top-[29px] text-[49px] font-bold leading-none">Bai</span>
      <span className="absolute left-[91px] top-[42px] text-[26px] leading-none text-[#c4c4c4]">du</span>
      <span className="absolute left-[146px] top-[35px] text-[37px] font-bold leading-none font-['Noto_Sans_CJK_SC',sans-serif] whitespace-nowrap">经验</span>
      <span className="absolute left-[1px] top-[81px] text-[26px] leading-none whitespace-nowrap tracking-[0.8px]">jingyan.baidu.com</span>
    </div>
  );
}

export default function App() {
  return (
    <div className="relative w-[1280px] h-[988px] overflow-hidden bg-[#d6d6d6] flex flex-col font-['Liberation_Sans','Noto_Sans_CJK_SC',sans-serif]">
      <div className="h-[2px] shrink-0 bg-[#5f7f9f]" />
      <div className="h-[977px] shrink-0 flex">
        <div className="w-[4px] shrink-0 bg-linear-to-r from-[#6f9fc0] to-[#d8e4ea]" />
        <div className="flex-1 flex flex-col min-w-0">
          <TitleBar />
          <MenuBar />
          <OptionsBar />
          <div className="flex-1 flex min-h-0">
            <Toolbar />
            <Document />
            <Dock />
            <RightPanels />
          </div>
        </div>
        <div className="w-[4px] shrink-0 bg-[#cfdbe3]" />
      </div>
      <div className="h-[5px] shrink-0 bg-[#dce6ec] border-t border-[#444]" />
      <div className="flex-1 bg-linear-to-r from-[#2a6fa5] via-[#4a9ac5] to-[#2a6fa5] flex">
        {[122, 245, 307, 370].map(x => <div key={x} className="w-[58px] h-full bg-[#e8eef2] border border-[#567]" style={{ marginLeft: x === 122 ? x : 5 }} />)}
      </div>
      <Annotation />
      <Watermark />
    </div>
  );
}
